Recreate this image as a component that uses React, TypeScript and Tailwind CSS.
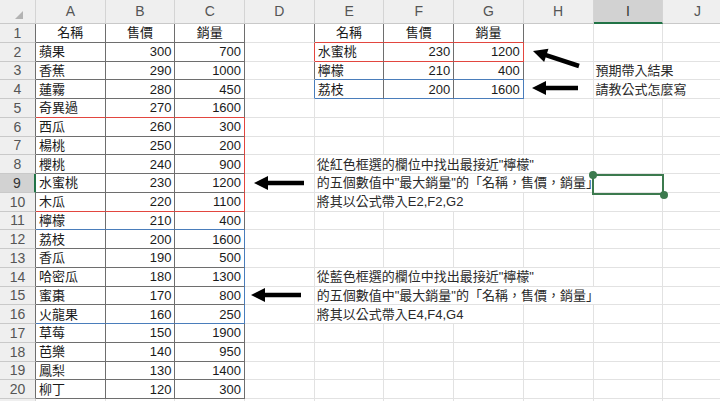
import React from "react";

const colA = ["名稱","蘋果","香蕉","蓮霧","奇異過","西瓜","楊桃","櫻桃","水蜜桃","木瓜","檸檬","荔枝","香瓜","哈密瓜","蜜棗","火龍果","草莓","芭樂","鳳梨","柳丁"];
const colB = ["售價","300","290","280","270","260","250","240","230","220","210","200","190","180","170","160","150","140","130","120"];
const colC = ["銷量","700","1000","450","1600","300","200","900","1200","1100","400","1600","500","1300","800","250","1900","950","1400","300"];
const tE = ["名稱","水蜜桃","檸檬","荔枝"];
const tF = ["售價","230","210","200"];
const tG = ["銷量","1200","400","1600"];
const notes: Record<number, string> = {
  8: "從紅色框選的欄位中找出最接近\"檸檬\"",
  9: "的五個數值中\"最大銷量\"的「名稱，售價，銷量」",
  10: "將其以公式帶入E2,F2,G2",
  14: "從藍色框選的欄位中找出最接近\"檸檬\"",
  15: "的五個數值中\"最大銷量\"的「名稱，售價，銷量」",
  16: "將其以公式帶入E4,F4,G4",
};
const letters = ["A","B","C","D","E","F","G","H","I","J"];

type Col = "light" | "hdr" | "dark" | "red" | "blue" | "green";
const RB: Record<Col, string> = {
  light: "border-r border-r-[#e2e2e2]",
  hdr: "border-r border-r-[#d4d4d4]",
  dark: "border-r border-r-[#6e6e6e]",
  red: "border-r border-r-[#e2463f]",
  blue: "border-r border-r-[#4a7dbb]",
  green: "border-r-2 border-r-[#217346]",
};
const BB: Record<Col, string> = {
  light: "border-b border-b-[#e2e2e2]",
  hdr: "border-b border-b-[#c9c9c9]",
  dark: "border-b border-b-[#6e6e6e]",
  red: "border-b border-b-[#e2463f]",
  blue: "border-b border-b-[#4a7dbb]",
  green: "border-b-2 border-b-[#217346]",
};

function rightCol(r: number, c: number): Col {
  if (r === 0) return "hdr";
  if (c === 0 && r === 9) return "green";
  if (c === 3 && r >= 6 && r <= 10) return "red";
  if (c === 3 && r >= 12 && r <= 16) return "blue";
  if ((c === 4 || c === 7) && r === 2) return "red";
  if ((c === 4 || c === 7) && r === 4) return "blue";
  if (r >= 1 && r <= 20 && c <= 3) return "dark";
  if (r >= 1 && r <= 4 && c >= 4 && c <= 7) return "dark";
  if (c === 0) return "hdr";
  return "light";
}

function bottomCol(r: number, c: number): Col {
  if (r === 0) return c === 9 ? "green" : "hdr";
  if (c >= 1 && c <= 3) {
    if (r === 5 || r === 10) return "red";
    if (r === 11 || r === 16) return "blue";
    if (r >= 1 && r <= 20) return "dark";
  }
  if (c >= 5 && c <= 7) {
    if (r === 1 || r === 2) return "red";
    if (r === 3 || r === 4) return "blue";
  }
  if (c === 0) return "hdr";
  return "light";
}

type Content = { t: string; a: "l" | "r" | "c"; spill?: boolean };

function content(r: number, c: number): Content | null {
  if (r >= 1 && r <= 20) {
    if (c === 1) return { t: colA[r - 1], a: r === 1 ? "c" : "l" };
    if (c === 2) return { t: colB[r - 1], a: r === 1 ? "c" : "r" };
    if (c === 3) return { t: colC[r - 1], a: r === 1 ? "c" : "r" };
  }
  if (r >= 1 && r <= 4) {
    if (c === 5) return { t: tE[r - 1], a: r === 1 ? "c" : "l" };
    if (c === 6) return { t: tF[r - 1], a: r === 1 ? "c" : "r" };
    if (c === 7) return { t: tG[r - 1], a: r === 1 ? "c" : "r" };
  }
  if (c === 9 && r === 3) return { t: "預期帶入結果", a: "l", spill: true };
  if (c === 9 && r === 4) return { t: "請教公式怎麼寫", a: "l", spill: true };
  if (c === 5 && notes[r]) return { t: notes[r], a: "l", spill: true };
  return null;
}

function Cell({ r, c }: { r: number; c: number }) {
  const base = `${RB[rightCol(r, c)]} ${BB[bottomCol(r, c)]}`;
  if (r === 0) {
    if (c === 0) {
      return (
        <div className={`${base} bg-[#efefef] flex items-end justify-end pr-[12px] pb-[4px]`}>
          <div className="w-0 h-0 border-l-[8px] border-l-transparent border-b-[8px] border-b-[#b3b3b3]" />
        </div>
      );
    }
    const sel = c === 9;
    return (
      <div
        className={`${base} ${sel ? "bg-[#d2d2d2] text-[#333]" : "bg-[#efefef] text-[#555]"} flex items-center justify-center text-[14px]`}
      >
        {letters[c - 1]}
      </div>
    );
  }
  if (c === 0) {
    const sel = r === 9;
    return (
      <div
        className={`${base} ${sel ? "bg-[#d2d2d2] text-[#333]" : "bg-[#efefef] text-[#555]"} flex items-center justify-center text-[14px] leading-none`}
      >
        {r <= 20 ? r : ""}
      </div>
    );
  }
  const ct = content(r, c);
  if (!ct) return <div className={base} />;
  const just = ct.a === "l" ? "justify-start" : ct.a === "r" ? "justify-end" : "justify-center";
  if (ct.spill) {
    return (
      <div className={`${base} relative flex items-center`}>
        <span className="relative z-10 h-full flex items-center bg-white px-[2px] whitespace-nowrap text-[13px] text-[#2a2a2a] leading-none">
          {ct.t}
        </span>
      </div>
    );
  }
  return (
    <div className={`${base} flex items-center ${just} px-[3px] text-[13px] text-[#1a1a1a] leading-none whitespace-nowrap overflow-hidden`}>
      {ct.t}
    </div>
  );
}

function Arrow({ x1, y1, x2, y2 }: { x1: number; y1: number; x2: number; y2: number }) {
  const dx = x2 - x1;
  const dy = y2 - y1;
  const len = Math.hypot(dx, dy);
  const ux = dx / len;
  const uy = dy / len;
  const px = -uy;
  const py = ux;
  const head = 14;
  const hw = 7;
  const bx = x2 - ux * head;
  const by = y2 - uy * head;
  const pts = `${x2},${y2} ${bx + px * hw},${by + py * hw} ${bx - px * hw},${by - py * hw}`;
  return (
    <g>
      <line x1={x1} y1={y1} x2={bx + ux * 2} y2={by + uy * 2} stroke="#000" strokeWidth={4.5} />
      <polygon points={pts} fill="#000" />
    </g>
  );
}

export default function App() {
  const rows = Array.from({ length: 22 }, (_, i) => i);
  const cols = Array.from({ length: 11 }, (_, i) => i);
  return (
    <div
      className="relative w-[720px] h-[401px] overflow-hidden bg-white"
      style={{ fontFamily: '"Liberation Sans", "Noto Sans CJK TC", sans-serif' }}
    >
      <div className="grid grid-cols-[36px_repeat(10,69.7px)] grid-rows-[24px_repeat(21,18.75px)] w-[733px]">
        {rows.map((r) => cols.map((c) => <Cell key={`${r}-${c}`} r={r} c={c} />))}
      </div>
      {/* selected cell I9 with touch handles */}
      <div className="absolute left-[592px] top-[174px] w-[72px] h-[21px] border-2 border-[#3c7a4e] z-20" />
      <div className="absolute left-[589px] top-[171px] w-[8px] h-[8px] rounded-full bg-[#3c7a4e] z-30" />
      <div className="absolute left-[660px] top-[191px] w-[8px] h-[8px] rounded-full bg-[#3c7a4e] z-30" />
      <svg className="absolute inset-0 z-20 pointer-events-none" width={720} height={401}>
        <Arrow x1={579} y1={66} x2={533} y2={51} />
        <Arrow x1={578} y1={88} x2={532} y2={88} />
        <Arrow x1={304} y1={183} x2={254} y2={183} />
        <Arrow x1={301} y1={295} x2={251} y2={295} />
      </svg>
    </div>
  );
}
